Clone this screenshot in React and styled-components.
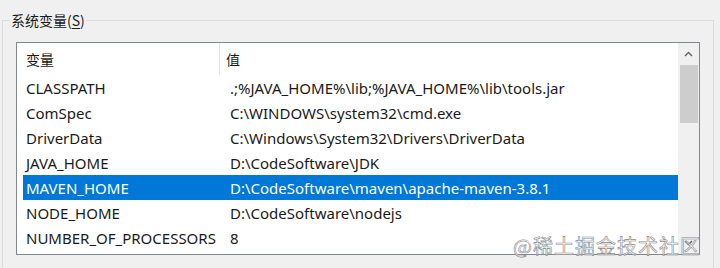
import React from "react";
import styled, { createGlobalStyle } from "styled-components";

const GlobalStyle = createGlobalStyle`
  html, body {
    margin: 0;
    padding: 0;
    background: #f0f0f0;
    overflow: hidden;
  }
  body {
    font-family: "Noto Sans", "Noto Sans CJK SC", sans-serif;
    font-size: 15px;
    color: #1a1a1a;
  }
`;

const Page = styled.div`
  position: relative;
  width: 720px;
  height: 268px;
  overflow: hidden;
`;

const GroupBox = styled.fieldset`
  margin: 10px 6px 0 2px;
  padding: 0 0 40px 13px;
  border: 1px solid #dcdcdc;
  min-width: 0;
`;

const Legend = styled.legend`
  margin-left: -6px;
  padding: 0 1px;
  line-height: 20px;
  font-size: 14px;
  color: #1a1a1a;
  font-family: "Noto Sans CJK SC", sans-serif;

  u {
    text-decoration: underline;
    text-underline-offset: 2px;
  }
`;

const ListBox = styled.div`
  margin-top: 12px;
  width: 684px;
  height: 213px;
  box-sizing: border-box;
  border: 1px solid #828790;
  background: #fff;
  display: flex;
`;

const ListBody = styled.div`
  flex: 1;
  display: flex;
  flex-direction: column;
  padding-left: 6px;
`;

const HeaderRow = styled.div`
  display: grid;
  grid-template-columns: 197px 1fr;
  height: 32px;
  align-items: stretch;
`;

const HeaderCell = styled.div`
  display: flex;
  align-items: center;
  padding-left: ${(p) => (p.first ? "3px" : "6px")};
  font-size: 14px;
  font-family: "Noto Sans CJK SC", sans-serif;
  border-right: ${(p) => (p.first ? "1px solid #e5e5e5" : "none")};
`;

const Row = styled.div`
  display: grid;
  grid-template-columns: 204px 1fr;
  height: 25px;
  align-items: center;
  background: ${(p) => (p.selected ? "#0078d7" : "transparent")};
  color: ${(p) => (p.selected ? "#fff" : "#1a1a1a")};
`;

const Cell = styled.div`
  padding-left: 3px;
  white-space: nowrap;
  overflow: hidden;
`;

const ScrollBar = styled.div`
  width: 21px;
  background: #f0f0f0;
  display: flex;
  flex-direction: column;
  align-items: center;
`;

const ArrowBtn = styled.div`
  height: 22px;
  width: 100%;
  display: flex;
  align-items: center;
  justify-content: center;
`;

const Thumb = styled.div`
  width: 18px;
  height: 58px;
  background: #cdcdcd;
`;

const Track = styled.div`
  flex: 1;
`;

const Watermark = styled.div`
  position: absolute;
  left: 513px;
  top: 231px;
  font-size: 20px;
  letter-spacing: 1px;
  color: rgba(255, 255, 255, 0.6);
  -webkit-text-stroke: 0.6px #8a8a8a;
  font-family: "Noto Sans CJK SC", sans-serif;
  white-space: nowrap;
`;

const rows = [
  ["CLASSPATH", ".;%JAVA_HOME%\\lib;%JAVA_HOME%\\lib\\tools.jar"],
  ["ComSpec", "C:\\WINDOWS\\system32\\cmd.exe"],
  ["DriverData", "C:\\Windows\\System32\\Drivers\\DriverData"],
  ["JAVA_HOME", "D:\\CodeSoftware\\JDK"],
  ["MAVEN_HOME", "D:\\CodeSoftware\\maven\\apache-maven-3.8.1"],
  ["NODE_HOME", "D:\\CodeSoftware\\nodejs"],
  ["NUMBER_OF_PROCESSORS", "8"],
];

function Chevron({ up }) {
  return (
    <svg width="9" height="6" viewBox="0 0 9 6">
      <path
        d={up ? "M1 5 L4.5 1.5 L8 5" : "M1 1 L4.5 4.5 L8 1"}
        fill="none"
        stroke="#606060"
        strokeWidth="1.4"
      />
    </svg>
  );
}

export default function App() {
  return (
    <Page>
      <GlobalStyle />
      <GroupBox>
        <Legend>
          系统变量(<u>S</u>)
        </Legend>
        <ListBox>
          <ListBody>
            <HeaderRow>
              <HeaderCell first>变量</HeaderCell>
              <HeaderCell>值</HeaderCell>
            </HeaderRow>
            {rows.map(([name, value]) => (
              <Row key={name} selected={name === "MAVEN_HOME"}>
                <Cell>{name}</Cell>
                <Cell>{value}</Cell>
              </Row>
            ))}
          </ListBody>
          <ScrollBar>
            <ArrowBtn>
              <Chevron up />
            </ArrowBtn>
            <Thumb />
            <Track />
            <ArrowBtn>
              <Chevron />
            </ArrowBtn>
          </ScrollBar>
        </ListBox>
      </GroupBox>
      <Watermark>@稀土掘金技术社区</Watermark>
    </Page>
  );
}
